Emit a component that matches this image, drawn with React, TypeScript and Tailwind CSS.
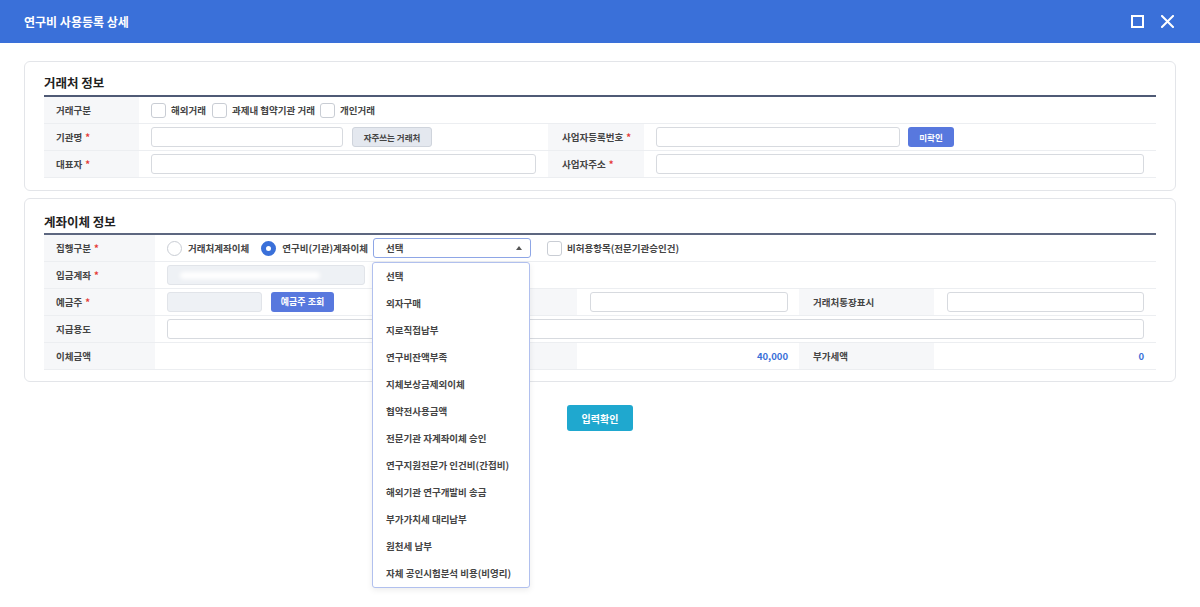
import { useState } from 'react'

const labelCell = "h-[27px] flex items-center bg-[#f6f7f9] border-b border-[#eceef1] font-bold text-[#444]"
const valueCell = "h-[27px] flex items-center bg-white border-b border-[#eceef1]"
const inputClass = "h-5 rounded-[3px] border border-[#d7dadf] bg-white outline-none"
const disabledClass = "h-5 rounded-[3px] border border-[#e1e4e9] bg-[#eef1f5]"
const blueBtn = "h-5 rounded-[3px] bg-[#5878de] text-white font-bold flex items-center justify-center"

const options = [
  '선택',
  '외자구매',
  '지로직접납부',
  '연구비잔액부족',
  '지체보상금제외이체',
  '협약전사용금액',
  '전문기관 자계좌이체 승인',
  '연구지원전문가 인건비(간접비)',
  '해외기관 연구개발비 송금',
  '부가가치세 대리납부',
  '원천세 납부',
  '자체 공인시험분석 비용(비영리)',
]

function Req() {
  return <span className="text-[#e53935] ml-[3px]">*</span>
}

function Checkbox({ className = '' }: { className?: string }) {
  return <span className={`block w-[15px] h-[15px] rounded-[3px] border border-[#c9cdd4] bg-white shrink-0 ${className}`} />
}

export default function App() {
  const [selected] = useState('선택')

  return (
    <div className="w-[1200px] h-[607px] bg-white font-['Noto_Sans_CJK_KR','Noto_Sans',sans-serif] text-[9.5px] text-[#333] overflow-hidden">
      {/* 헤더 */}
      <div className="h-[43px] bg-[#3a70d9] flex items-center justify-between pl-6 pr-[26px]">
        <h1 className="text-white font-bold text-[12px]">연구비 사용등록 상세</h1>
        <div className="flex items-center gap-[17px]">
          <span className="w-[13px] h-[13px] border-2 border-white" />
          <svg width="13" height="13" viewBox="0 0 13 13" className="text-white">
            <path d="M1 1L12 12M12 1L1 12" stroke="currentColor" strokeWidth="2" strokeLinecap="square" />
          </svg>
        </div>
      </div>

      <div className="px-6 pt-[18px]">
        {/* 거래처 정보 */}
        <div className="rounded-md border border-[#e3e5e9] px-[19px] pt-[13px] pb-[12px]">
          <h2 className="text-[12.5px] font-bold text-[#222] h-[22px] leading-[16px] border-b-2 border-[#4f5a75]">거래처 정보</h2>
          <div className="grid grid-cols-[95px_409px_96px_1fr]">
            <div className={`${labelCell} pl-3`}>거래구분</div>
            <div className={`${valueCell} col-span-3 pl-3 font-bold text-[#444]`}>
              <Checkbox />
              <span className="ml-[5px]">해외거래</span>
              <Checkbox className="ml-[6px]" />
              <span className="ml-[5px]">과제내 협약기관 거래</span>
              <Checkbox className="ml-[5px]" />
              <span className="ml-[5px]">개인거래</span>
            </div>

            <div className={`${labelCell} pl-3`}>기관명<Req /></div>
            <div className={`${valueCell} pl-3`}>
              <input className={`${inputClass} w-[192px]`} />
              <button className="ml-[9px] h-5 w-[80px] rounded-[3px] border border-[#cfd4dc] bg-[#e4e8ef] text-[8.5px] font-bold text-[#444]">자주쓰는 거래처</button>
            </div>
            <div className={`${labelCell} pl-[14px]`}>사업자등록번호<Req /></div>
            <div className={`${valueCell} pl-3`}>
              <input className={`${inputClass} w-[244px]`} />
              <button className={`${blueBtn} ml-2 w-[46px] text-[8.5px]`}>미확인</button>
            </div>

            <div className={`${labelCell} pl-3`}>대표자<Req /></div>
            <div className={`${valueCell} pl-3 pr-3`}>
              <input className={`${inputClass} w-full`} />
            </div>
            <div className={`${labelCell} pl-[14px]`}>사업자주소<Req /></div>
            <div className={`${valueCell} pl-3 pr-3`}>
              <input className={`${inputClass} w-full`} />
            </div>
          </div>
        </div>

        {/* 계좌이체 정보 */}
        <div className="mt-[7px] rounded-md border border-[#e3e5e9] px-[19px] pt-[13px] pb-[11px]">
          <h2 className="text-[12.5px] font-bold text-[#222] h-[23px] leading-[20px] border-b-2 border-[#5d6780]">계좌이체 정보</h2>
          <div className="grid grid-cols-[111px_287px_135px_222px_135px_1fr]">
            <div className={`${labelCell} pl-3`}>집행구분<Req /></div>
            <div className={`${valueCell} col-span-5 pl-3 font-bold text-[#444]`}>
              <span className="w-[15px] h-[15px] rounded-full border border-[#c9cdd4] bg-white shrink-0" />
              <span className="ml-[6px]">거래처계좌이체</span>
              <span className="ml-[12px] w-[15px] h-[15px] rounded-full border-[5px] border-[#3a70d9] bg-white shrink-0" />
              <span className="ml-[6px]">연구비(기관)계좌이체</span>
              <div className="relative ml-[5px]">
                <div className="h-5 w-[158px] rounded-[3px] border border-[#8ea6e6] bg-white flex items-center justify-between pl-[12px] pr-[8px]">
                  <span>{selected}</span>
                  <svg width="6" height="4" viewBox="0 0 6 4">
                    <path d="M0 4L3 0L6 4Z" fill="#555" />
                  </svg>
                </div>
                <ul className="absolute z-10 top-[24px] -left-px w-[158px] rounded-[3px] border border-[#b1c0ee] bg-white shadow-[0_2px_6px_rgba(0,0,0,0.08)]">
                  {options.map((o) => (
                    <li key={o} className="h-[27px] flex items-center pl-[13px] whitespace-nowrap">{o}</li>
                  ))}
                </ul>
              </div>
              <Checkbox className="ml-[16px]" />
              <span className="ml-[5px]">비허용항목(전문기관승인건)</span>
            </div>

            <div className={`${labelCell} pl-3`}>입금계좌<Req /></div>
            <div className={`${valueCell} col-span-5 pl-3`}>
              <div className={`${disabledClass} w-[198px] flex items-center pl-[12px]`}>
                <span className="h-[7px] w-[140px] rounded-full bg-white blur-[2px]" />
              </div>
            </div>

            <div className={`${labelCell} pl-3`}>예금주<Req /></div>
            <div className={`${valueCell} pl-3`}>
              <div className={`${disabledClass} w-[95px]`} />
              <button className={`${blueBtn} ml-[9px] w-[63px] text-[9px]`}>예금주 조회</button>
            </div>
            <div className={`${labelCell} pl-[14px]`}></div>
            <div className={`${valueCell} pl-[13px] pr-[11px]`}>
              <input className={`${inputClass} w-full`} />
            </div>
            <div className={`${labelCell} pl-[14px]`}>거래처통장표시</div>
            <div className={`${valueCell} pl-[13px] pr-3`}>
              <input className={`${inputClass} w-full`} />
            </div>

            <div className={`${labelCell} pl-3`}>지급용도</div>
            <div className={`${valueCell} col-span-5 pl-3 pr-3`}>
              <input className={`${inputClass} w-full`} />
            </div>

            <div className={`${labelCell} pl-3`}>이체금액</div>
            <div className={valueCell}></div>
            <div className={labelCell}></div>
            <div className={`${valueCell} justify-end pr-[11px] font-bold text-[#3a6fd8] text-[9.5px]`}>40,000</div>
            <div className={`${labelCell} pl-[14px]`}>부가세액</div>
            <div className={`${valueCell} justify-end pr-3 font-bold text-[#3a6fd8] text-[9.5px]`}>0</div>
          </div>
        </div>

        <div className="flex justify-center mt-[23px]">
          <button className="h-[26px] w-[66px] rounded-[3px] bg-[#1fa8cf] text-white font-bold text-[10px]">입력확인</button>
        </div>
      </div>
    </div>
  )
}
